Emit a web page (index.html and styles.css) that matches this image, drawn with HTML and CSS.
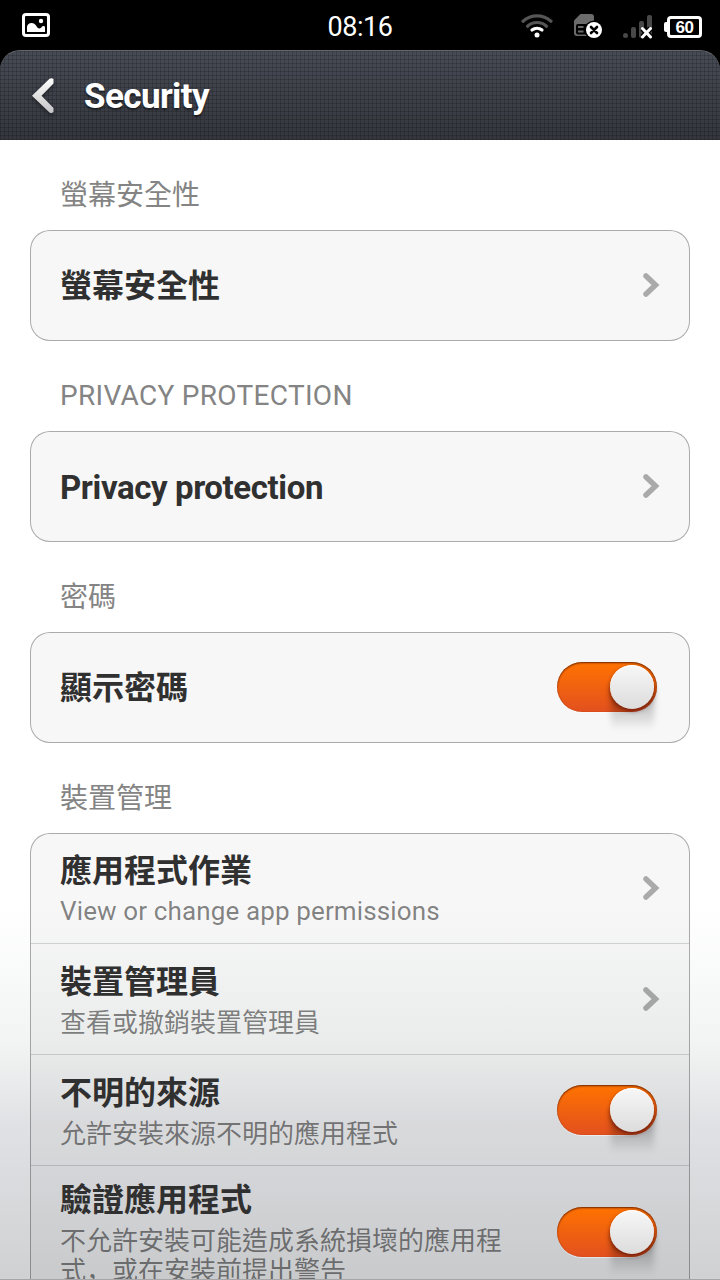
FILE: index.html
```html
<!DOCTYPE html>
<html lang="zh-Hant">

<head>
  <title>Security</title>

  <meta charset="UTF-8">
  <meta name="viewport" content="width=device-width, initial-scale=1">

  <link rel="stylesheet" href="styles.css">
</head>
<body>

  <div class="status-bar">
    <div class="status-left">
      <svg width="28" height="24" viewBox="0 0 28 24">
        <rect x="1.5" y="1.5" width="25" height="21" rx="2.5" fill="none" stroke="#fff" stroke-width="3"/>
        <path d="M5 19v-5c0-2 2-4 4.500-4s4 1.500 5 3.200c1 1.600 2 2.300 3 2.200c2 0 2-2.400 4-2.400c1 0 1.500.500 1.500 1.500V19z" fill="#fff"/>
        <circle cx="19" cy="8" r="2.200" fill="#fff"/>
      </svg>
    </div>
    <div class="clock">08:16</div>
    <div class="status-right">
      <svg class="wifi" width="32" height="25" viewBox="0 0 32 25">
        <g fill="none" stroke-width="3.200" stroke-linecap="round">
          <path d="M2 8.200a21 21 0 0 1 28 0" stroke="#555"/>
          <path d="M6.500 13.200a14 14 0 0 1 19 0" stroke="#555"/>
          <path d="M11 17a8 8 0 0 1 10 0" stroke="#fff"/>
        </g>
        <circle cx="16" cy="22" r="2.500" fill="#fff"/>
      </svg>
      <svg class="sim" width="29" height="25" viewBox="0 0 29 25">
        <path d="M0 6.500L6.500 0H17a3 3 0 0 1 3 3V22H3a3 3 0 0 1-3-3z" fill="#6b6b6b"/>
        <rect x="2" y="10" width="16" height="10.500" rx="2" fill="#000"/>
        <path d="M4 12h5.500v2H4zM4 16.500h5.500v2H4z" fill="#6b6b6b"/>
        <circle cx="20" cy="16" r="9.500" fill="#000"/>
        <circle cx="20" cy="16" r="8" fill="#fff"/>
        <path d="M17 13l6 6M23 13l-6 6" stroke="#000" stroke-width="2.600" stroke-linecap="round"/>
      </svg>
      <svg class="signal" width="30" height="24" viewBox="0 0 30 24">
        <g fill="#484848">
          <rect x="0" y="18" width="5" height="5" rx="2.500"/>
          <rect x="8" y="12" width="5" height="11" rx="2"/>
          <rect x="16" y="6" width="5" height="17" rx="2"/>
          <rect x="24" y="0" width="5" height="23" rx="2"/>
        </g>
        <path d="M19.500 13.500l8 8.500M27.500 13.500l-8 8.500" stroke="#000" stroke-width="5.500"/>
        <path d="M19.500 13.500l8 8.500M27.500 13.500l-8 8.500" stroke="#fff" stroke-width="3" stroke-linecap="round"/>
      </svg>
      <div class="battery">60</div>
    </div>
  </div>

  <header class="title-bar">
    <svg class="back" width="24" height="37" viewBox="0 0 24 37">
      <defs>
        <linearGradient id="backFill" x1="0" y1="0" x2="0" y2="1">
          <stop offset="0" stop-color="#fff"/>
          <stop offset="1" stop-color="#c4c4c6"/>
        </linearGradient>
      </defs>
      <path d="M0 17.700L17.500 0.800Q19.500-0.600 21.500 1V5.500L9.500 17.700L21.500 30V34Q19.500 36 17.500 34.400z" fill="url(#backFill)"/>
    </svg>
    <h1>Security</h1>
  </header>

  <main class="settings">
    <h2>螢幕安全性</h2>
    <div class="card">
      <div class="row">
        <div class="title">螢幕安全性</div>
        <svg class="arrow" viewBox="0 0 17 24"><path d="M3 3l9.500 9L3 21"/></svg>
      </div>
    </div>

    <h2 class="latin">PRIVACY PROTECTION</h2>
    <div class="card">
      <div class="row">
        <div class="title latin">Privacy protection</div>
        <svg class="arrow" viewBox="0 0 17 24"><path d="M3 3l9.500 9L3 21"/></svg>
      </div>
    </div>

    <h2>密碼</h2>
    <div class="card">
      <div class="row">
        <div class="title">顯示密碼</div>
        <div class="switch"></div>
      </div>
    </div>

    <h2>裝置管理</h2>
    <div class="card">
      <div class="row">
        <div class="text">
          <div class="title">應用程式作業</div>
          <div class="summary latin">View or change app permissions</div>
        </div>
        <svg class="arrow" viewBox="0 0 17 24"><path d="M3 3l9.500 9L3 21"/></svg>
      </div>
      <div class="row">
        <div class="text">
          <div class="title">裝置管理員</div>
          <div class="summary">查看或撤銷裝置管理員</div>
        </div>
        <svg class="arrow" viewBox="0 0 17 24"><path d="M3 3l9.500 9L3 21"/></svg>
      </div>
      <div class="row">
        <div class="text">
          <div class="title">不明的來源</div>
          <div class="summary">允許安裝來源不明的應用程式</div>
        </div>
        <div class="switch"></div>
      </div>
      <div class="row tall">
        <div class="text">
          <div class="title">驗證應用程式</div>
          <div class="summary">不允許安裝可能造成系統損壞的應用程式<span class="comma" lang="zh-Hans">，</span>或在安裝前提出警告</div>
        </div>
        <div class="switch"></div>
      </div>
    </div>
  </main>

</body>
</html>
```

FILE: styles.css
```css
* {
  box-sizing: border-box;
}

body {
  margin: 0;
  width: 720px;
  height: 1280px;
  overflow: hidden;
  display: flex;
  flex-direction: column;
  background: #000;
  font-family: Roboto, "Noto Sans CJK TC", sans-serif;
}

h1, h2 {
  margin: 0;
}

/* status bar */

.status-bar {
  height: 50px;
  flex: none;
  display: grid;
  grid-template-columns: 1fr auto 1fr;
  padding: 0 18px 0 22px;
  color: #fff;
}

.status-left {
  padding-top: 13px;
}

.clock {
  font-size: 27px;
  line-height: 54px;
  letter-spacing: -0.4px;
  padding-right: 4px;
}

.status-right {
  display: flex;
  justify-content: flex-end;
  align-items: flex-start;
}

.wifi {
  margin: 13px 21px 0 0;
}

.sim {
  margin: 14px 20px 0 0;
}

.signal {
  margin: 15px 14px 0 0;
}

.battery {
  position: relative;
  width: 35px;
  height: 22px;
  margin-top: 16px;
  border: 3px solid #fff;
  border-radius: 4px;
  font: bold 17px/17px "Liberation Sans", sans-serif;
  letter-spacing: -0.4px;
  text-align: center;
}

.battery::before {
  content: "";
  position: absolute;
  left: -6px;
  top: 3px;
  width: 4px;
  height: 10px;
  border-radius: 2px 0 0 2px;
  background: #fff;
}

/* title bar */

.title-bar {
  height: 90px;
  flex: none;
  display: flex;
  align-items: center;
  padding: 2px 32px 0;
  gap: 28px;
  border-top: 1px solid #66686c;
  border-radius: 20px 20px 0 0;
  background:
    repeating-linear-gradient(90deg, rgba(0, 0, 0, .17) 0 1px, transparent 1px 4px),
    repeating-linear-gradient(rgba(0, 0, 0, .17) 0 1px, transparent 1px 4px),
    linear-gradient(#474b55, #34363d);
  color: #fff;
}

.title-bar h1 {
  font-size: 35px;
  line-height: 40px;
  letter-spacing: -0.6px;
  text-shadow: 0 2px 2px rgba(0, 0, 0, .5);
}

.back {
  filter: drop-shadow(0 2px 2px rgba(0, 0, 0, .4));
}

/* settings list */

.settings {
  flex: 1;
  min-height: 0;
  overflow: hidden;
  padding: 0 30px;
  border-bottom: 1px solid #a6a6a8;
  background: linear-gradient(#fff 765px, #f2f4f3 905px, #e0e1e4 985px, #d0d1d3 1139px);
}

.settings h2 {
  height: 90px;
  padding: 18px 30px 0;
  font-size: 28px;
  font-weight: normal;
  line-height: 76px;
  color: #848484;
}

.settings h2.latin {
  padding-top: 17px;
  letter-spacing: 0.3px;
}

.card {
  border: 1px solid rgba(0, 0, 0, .31);
  border-radius: 20px;
  background: rgba(0, 0, 0, .032);
}

.row {
  height: 109px;
  display: flex;
  align-items: center;
  justify-content: space-between;
  padding: 0 29px 1px;
}

.row + .row {
  height: 111px;
  padding-bottom: 0;
  border-top: 1px solid rgba(0, 0, 0, .15);
}

.row.tall {
  height: 133px;
}

.text {
  width: 450px;
}

.title {
  font-size: 32px;
  font-weight: bold;
  line-height: 38px;
  color: #303030;
}

.row > .title {
  padding-top: 2px;
}

.row > .title.latin {
  padding-top: 4px;
  font-size: 33px;
  letter-spacing: -0.4px;
}

.summary {
  margin: 7px 0 -3px;
  font-size: 26px;
  line-height: 30px;
  color: rgba(0, 0, 0, .49);
}

.summary.latin {
  margin: 6px 0 -2px;
  letter-spacing: 0.13px;
}

.comma {
  font-family: "Noto Sans CJK SC", sans-serif;
  line-height: 1;
}

.arrow {
  width: 17px;
  height: 24px;
  fill: none;
  stroke: rgba(0, 0, 0, .31);
  stroke-width: 5.5;
  stroke-linecap: round;
}

/* on / off switch */

.switch {
  position: relative;
  width: 100px;
  height: 50px;
  margin-right: 3px;
  border-radius: 25px;
  background: linear-gradient(#ff7300, #e2501f);
  box-shadow: inset 0 1px 2px rgba(80, 20, 0, .85), 0 1px 0 rgba(255, 255, 255, .5);
}

.switch::before {
  content: "";
  position: absolute;
  left: 54px;
  top: 26px;
  width: 43px;
  height: 42px;
  background: linear-gradient(rgba(0, 0, 0, .38), transparent);
  filter: blur(3px);
}

.switch::after {
  content: "";
  position: absolute;
  left: 53px;
  top: 3px;
  width: 44px;
  height: 44px;
  border-radius: 50%;
  background: linear-gradient(#f7f7f7, #dcdcdc);
  box-shadow: inset 0 1px 1px #fff, 0 2px 4px rgba(60, 0, 0, .6);
}
```
